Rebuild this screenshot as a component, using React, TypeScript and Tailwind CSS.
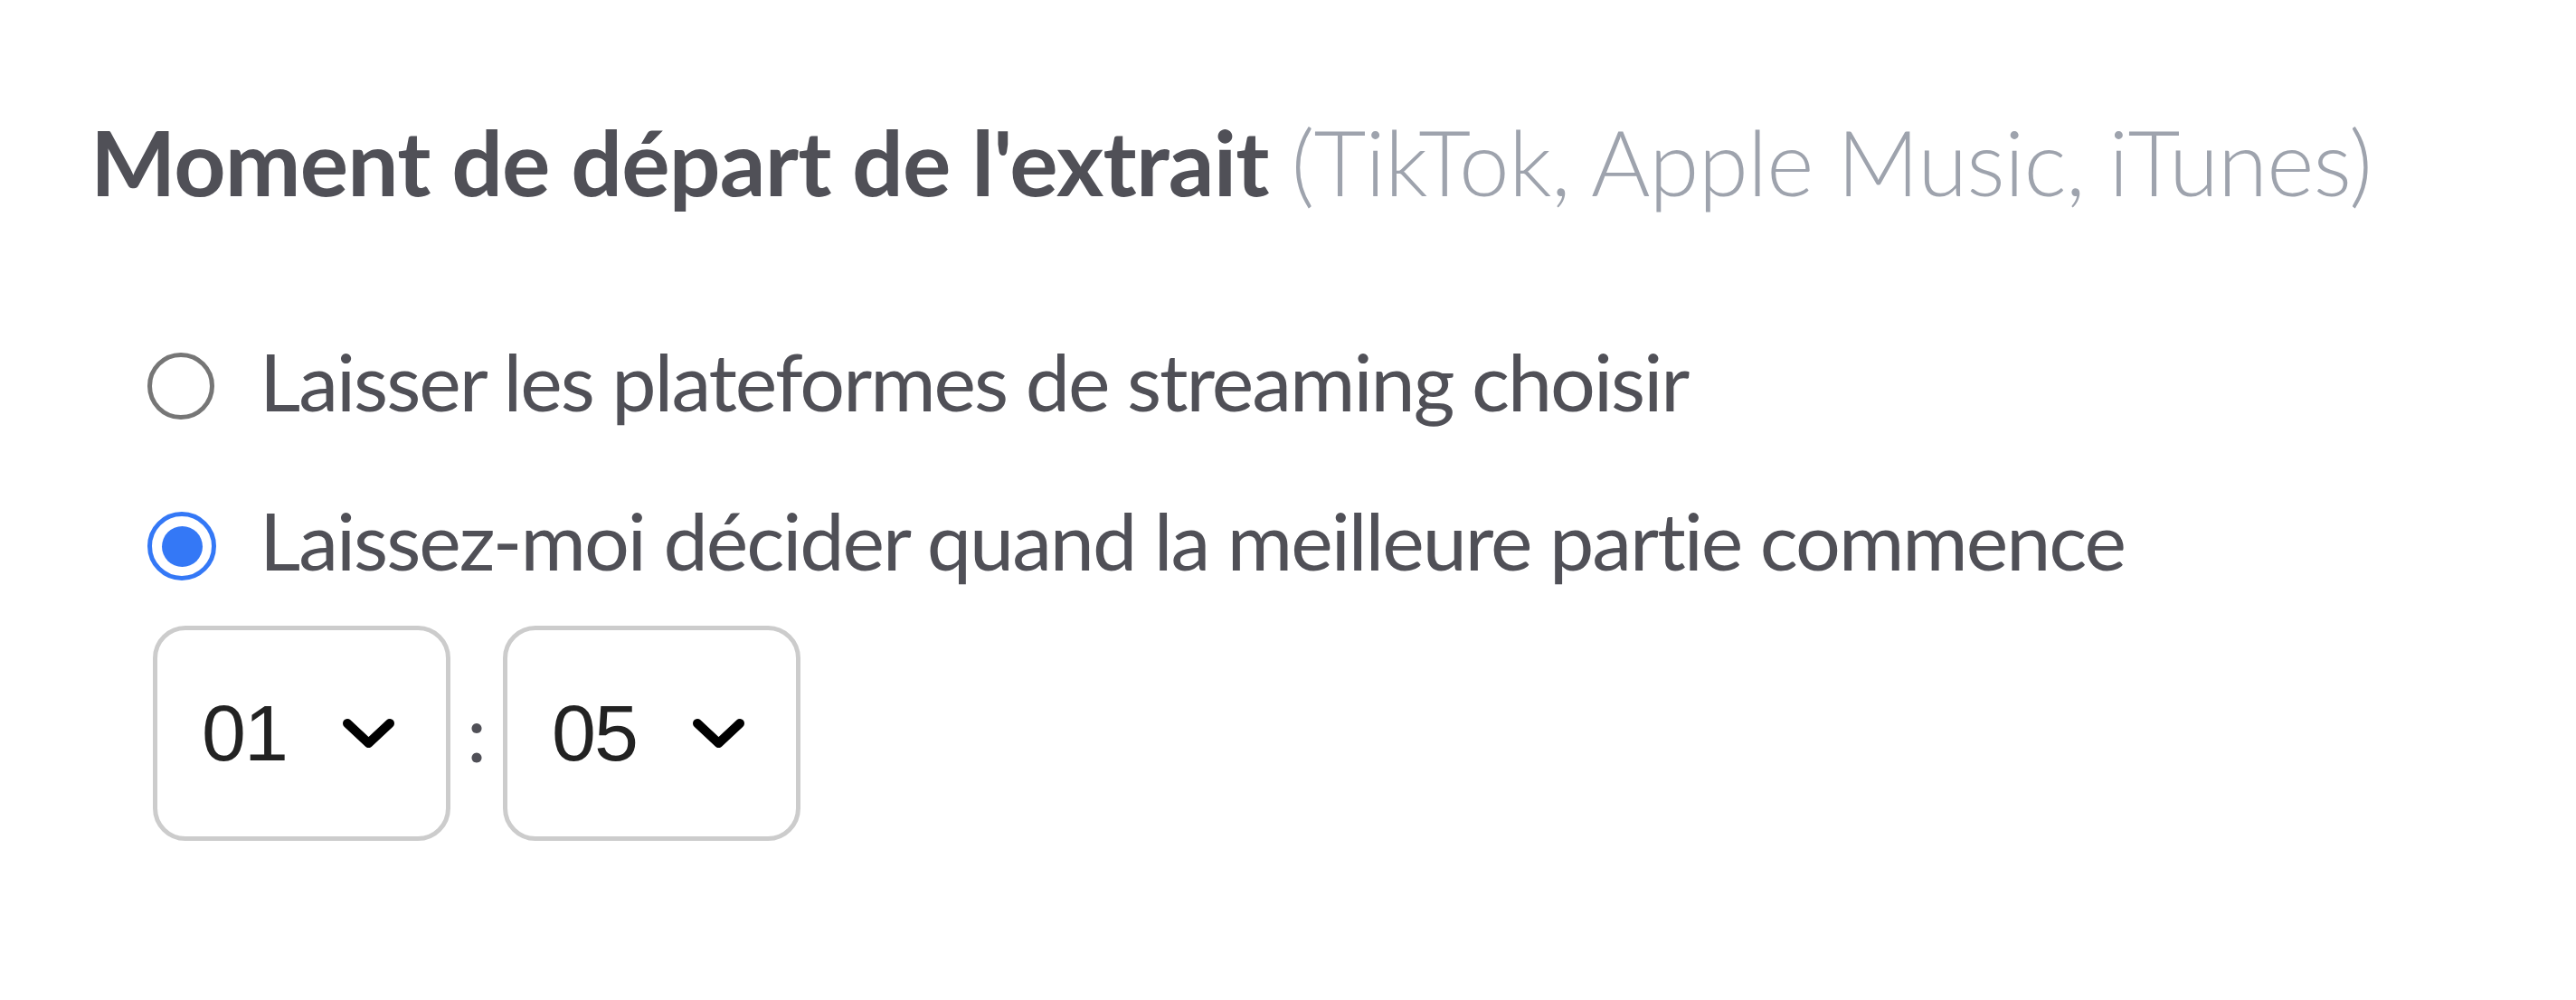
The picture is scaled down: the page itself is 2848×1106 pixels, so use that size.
import { useState } from "react";

const Chevron = () => (
  <svg width="57" height="32" viewBox="0 0 57 32" fill="none" className="block shrink-0">
    <polyline points="5,5 28.5,27 52,5" stroke="#000" strokeWidth="10" strokeLinecap="round" strokeLinejoin="round" />
  </svg>
);

function TimeBox({ value }: { value: string }) {
  return (
    <div className="flex items-center w-[329px] h-[238px] border-[5px] border-[#cccccc] rounded-[36px] bg-white pl-[49px] pr-[57px]">
      <span className="text-[88px] leading-none tracking-[-2px] text-[#222222] font-['Liberation_Sans',Arial,sans-serif]">{value}</span>
      <span className="ml-auto">
        <Chevron />
      </span>
    </div>
  );
}

function Radio({ checked }: { checked: boolean }) {
  if (checked) {
    return (
      <span className="flex shrink-0 w-[76px] h-[76px] rounded-full border-[5px] border-[#3478f6] items-center justify-center">
        <span className="block w-[45px] h-[45px] rounded-full bg-[#3478f6]" />
      </span>
    );
  }
  return <span className="block shrink-0 w-[74px] h-[74px] rounded-full border-[5px] border-[#767676]" />;
}

function App() {
  const [choice, setChoice] = useState(1);

  const options = [
    "Laisser les plateformes de streaming choisir",
    "Laissez-moi décider quand la meilleure partie commence",
  ];

  return (
    <div className="min-h-screen bg-white font-['Lato',sans-serif] text-[#505057] [font-variant-ligatures:none]">
      <h2 className="pt-[118px] pl-[100px] text-[100px] leading-[120px] whitespace-nowrap tracking-[-0.8px]">
        <span className="font-bold">Moment de départ de l'extrait</span>{" "}
        <span className="font-light text-[#9ea3ad]">(TikTok, Apple Music, iTunes)</span>
      </h2>

      <div className="pl-[163px] mt-[130px] flex flex-col gap-[70px]">
        {options.map((label, i) => (
          <label key={i} className="flex items-start cursor-pointer" onClick={() => setChoice(i)}>
            <span className="block w-[76px] mt-[22px]">
              <Radio checked={choice === i} />
            </span>
            <span className="ml-[48px] text-[88px] leading-[106px] whitespace-nowrap tracking-[-2px]">{label}</span>
          </label>
        ))}
      </div>

      <div className="ml-[169px] mt-[42px] flex items-center">
        <TimeBox value="01" />
        <span className="w-[58px] text-center text-[88px] leading-none mb-[4px]">:</span>
        <TimeBox value="05" />
      </div>
    </div>
  );
}

export default App;
